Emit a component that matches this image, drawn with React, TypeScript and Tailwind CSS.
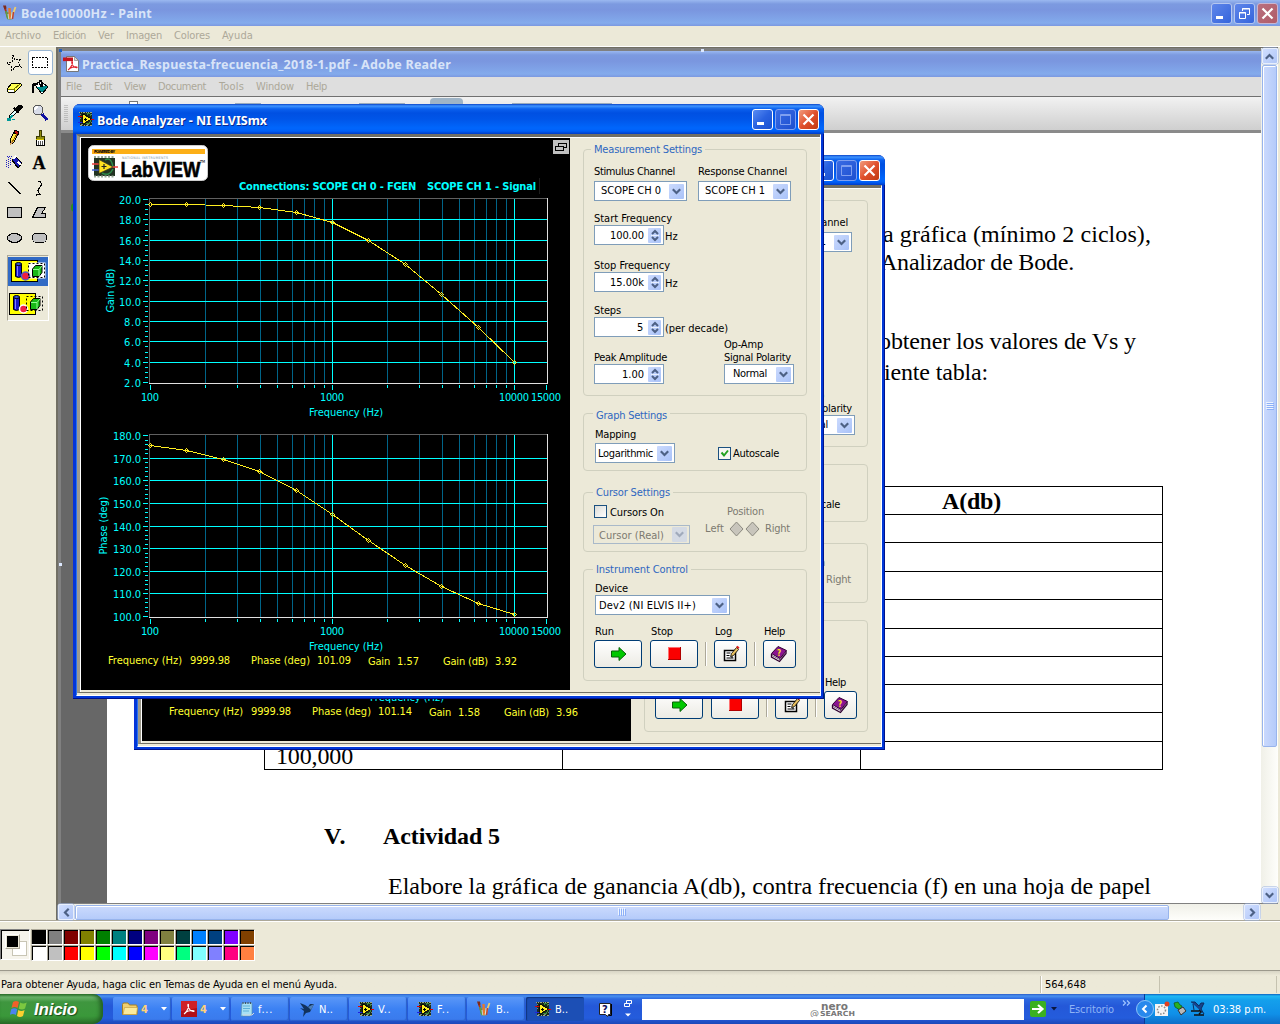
import React, { useLayoutEffect, useRef, useState } from "react";

/** Text tracked so that its run is exactly `w` pixels wide. */
function Fit({ w, className = "", children }: { w: number; className?: string; children: string }) {
  const ref = useRef<HTMLSpanElement>(null);
  const [ls, setLs] = useState(0);
  useLayoutEffect(() => {
    const el = ref.current;
    if (!el) return;
    const natural = el.getBoundingClientRect().width - ls * children.length;
    const next = (w - natural) / children.length;
    if (Math.abs(next - ls) > 0.005) setLs(next);
  }, [w, children]);
  return (
    <span className={"inline-block shrink-0 whitespace-nowrap " + className} style={{ width: w }}>
      <span ref={ref} className="inline-block" style={{ letterSpacing: ls }}>
        <span className="whitespace-pre">{children}</span>
      </span>
    </span>
  );
}

/* ---------- small icons ---------- */

const VIcon = ({ size = 16 }: { size?: number }) => (
  <svg width={size} height={size} viewBox="0 0 16 16" shapeRendering="crispEdges" className="shrink-0">
    <rect x="2" y="1" width="12" height="14" fill="#1b2b1b" />
    <path d="M1 1.500h1M3 1.500h1M5 1.500h2M8 1.500h1M10 1.500h1M12 1.500h2M2 14.500h2M6 14.500h1M8 14.500h2M12 14.500h2" stroke="#9a8" />
    <path d="M2.500 3v1M2.500 7v1M13.500 3v1M13.500 11v1M3 13.500h2M9 13.500h2" stroke="#787" />
    <path d="M9 4c1-3 3-2 4 1M8 12c3 2 4 0 5-3" stroke="#3c8c3c" fill="none" />
    <path d="M0 5.500h5M11 8.500h5" stroke="#e00000" />
    <path d="M0 11.500h5" stroke="#2020e0" />
    <path d="M4.500 3v10l8-5z" fill="#ffee20" stroke="#000" strokeWidth=".6" />
    <path d="M6 8.500h3M7.500 7v3" stroke="#000" strokeWidth="1" />
  </svg>
);

const PaintIcon = () => (
  <svg width="16" height="16" viewBox="0 0 16 16" className="shrink-0">
    <path d="M4 7l1 7q3 2 6 0l1-7z" fill="#7d9a88" opacity=".9" />
    <path d="M2.500 1.500L6 13" stroke="#b33016" strokeWidth="1.800" />
    <path d="M7.500 3l.5 11" stroke="#e8792a" strokeWidth="2.400" />
    <path d="M13.500 2L9.500 13" stroke="#f0cf6a" strokeWidth="1.800" />
    <path d="M4 6l2 8" stroke="#58a04a" strokeWidth="1.800" />
    <path d="M1 .5l3 0 .5 3-2 1z" fill="#802a1a" />
    <path d="M6 9l.8 5M10 7l-.8 7" stroke="#d9e6ee" strokeWidth=".8" />
    <path d="M11.500 7l-1 7" stroke="#b8403a" strokeWidth="1.500" />
  </svg>
);

const PdfIcon = () => (
  <svg width="17" height="16" viewBox="0 0 17 16" className="shrink-0">
    <path d="M3.500 .5h8l4 4v11h-12z" fill="#fff" stroke="#777" />
    <path d="M11.500 .5v4h4z" fill="#d8d8d8" stroke="#777" strokeWidth=".6" />
    <rect x="0" y="1.500" width="10" height="3.600" fill="#c4141c" />
    <path d="M5 14c2-1 5-6 4.500-8c-.6-1.200-1.500 .4 .2 3.200c1.300 2 3.500 3 4.300 2.300s-3-1.200-7 .8" fill="none" stroke="#e0202a" strokeWidth="1.100" />
  </svg>
);

const Chevron = ({ dir = "down", color = "#4d6185" }: { dir?: string; color?: string }) => (
  <svg
    width="9"
    height="7"
    viewBox="0 0 9 7"
    className={dir === "up" ? "rotate-180" : dir === "left" ? "rotate-90" : dir === "right" ? "-rotate-90" : ""}
  >
    <path d="M.8 1.300L4.500 5L8.200 1.300" fill="none" stroke={color} strokeWidth="2.200" />
  </svg>
);

/* ---------- Paint tool box ---------- */

const toolShapes: React.ReactNode[] = [
  <path d="M7 1l2 5 6-1-3 4 3 4-5-1-4 5-1-5-4-3 5-1z" fill="none" stroke="#000" strokeDasharray="2 1" />,
  <rect x="1.500" y="3.500" width="15" height="10" fill="none" stroke="#000" strokeDasharray="2 1" />,
  <>
    <path d="M6 4h8l1 1v2l-6 6H2l-1-1v-2z" fill="#ffff50" stroke="#000" />
    <path d="M2 10h6l6-5M8 10v3" fill="none" stroke="#777700" />
    <path d="M2 11h6v2H3z" fill="#fff" />
  </>,
  <>
    <path d="M4 6l5-4 8 6-6 7z" fill="#fff" stroke="#000" />
    <path d="M6 8l9-1 1 1-5 6z" fill="#008c8c" />
    <path d="M2 14V7q1-3 5-2" fill="none" stroke="#000" strokeWidth="2.500" />
    <path d="M8 6V1h2v5" fill="none" stroke="#000" />
    <path d="M9 5h3v3H9z" fill="#000" />
  </>,
  <>
    <path d="M10 5l3-4h2l1 1v2l-4 4z" fill="#000" stroke="#000" />
    <path d="M8 4l5 5" stroke="#000" strokeWidth="2" />
    <path d="M9 6l2 2-6 6H3v-2z" fill="#e0ffff" stroke="#000" />
    <path d="M5 11l2 1-2 2-2 1M1 14h3v2H1zM6 15h3" fill="#009a9a" stroke="#009a9a" />
  </>,
  <>
    <circle cx="7" cy="6" r="5" fill="#d8dce8" stroke="#555" />
    <path d="M4 6q0-3 3-3" stroke="#fff" strokeWidth="2" fill="none" />
    <path d="M11 10l5 6" stroke="#1010a0" strokeWidth="3" />
  </>,
  <>
    <path d="M9 1l4 2-5 10-4 3 0-5z" fill="#ffee40" stroke="#000" />
    <path d="M9 1l4 2-1 3-4-2z" fill="#c01010" stroke="#000" />
    <path d="M5 12l3 1-4 3z" fill="#d8a060" />
    <path d="M11 5L6 13" stroke="#a06000" />
  </>,
  <>
    <path d="M8 1h2v6h3v3H5V7h3z" fill="#908c10" stroke="#3c3c00" />
    <path d="M5 10h8v6H5z" fill="#fff" stroke="#000" />
    <path d="M7 12v4M9 12v4M11 12v4" stroke="#555" />
    <path d="M5 10h8" stroke="#d0c000" />
  </>,
  <>
    <path d="M6 6l4-3 6 6-4 5z" fill="#1818b0" stroke="#000" />
    <path d="M7 5l3-3M12 8l3 3" stroke="#fff" strokeWidth="1.500" />
    <path d="M2 3v12M4 4v8M0 6v8M1 2h6" stroke="#2020c0" strokeDasharray="1 1" />
  </>,
  <text x="8" y="14.500" textAnchor="middle" fontFamily="Liberation Serif" fontWeight="bold" fontSize="18" stroke="#000" strokeWidth=".3">A</text>,
  <path d="M2 3l13 12" stroke="#000" strokeWidth="1.300" />,
  <path d="M7 2q6 2 2 6t0 7l-4 1" fill="none" stroke="#000" strokeWidth="1.300" />,
  <rect x="1.500" y="3.500" width="14" height="10" fill="#c0c0c0" stroke="#000" />,
  <path d="M6.500 3.500h8l-4 6h4v4H1.500z" fill="#c0c0c0" stroke="#000" />,
  <ellipse cx="8.500" cy="9" rx="7" ry="4.500" fill="#c0c0c0" stroke="#000" />,
  <rect x="1.500" y="4" width="14" height="9.500" rx="4" fill="#c0c0c0" stroke="#000" />,
];

const Shapes = ({ opaque }: { opaque: boolean }) => (
  <svg width="36" height="24" viewBox="0 0 36 24" className="shrink-0">
    <rect x="1.500" y="1.500" width="26" height="21" fill="#ffff00" stroke="#000" />
    <rect x="19" y="4" width="16" height="15" fill={opaque ? "#fff" : "none"} stroke={opaque ? "#fff" : "none"} />
    <path d="M5.500 5v12.500q3 2 6 0V5z" fill="#1818c8" stroke="#000" />
    <path d="M7.500 7v10" stroke="#8080ff" />
    <ellipse cx="8.500" cy="5" rx="3" ry="1.500" fill="#3050e0" stroke="#000" />
    <circle cx="15.500" cy="17" r="4" fill="#f02040" stroke={opaque ? "#5060c0" : "#fff"} strokeWidth="1.500" />
    <path d="M22.500 10l3-3.500h6.500v7l-3 4h-6.500z" fill="#18b818" stroke="#000" />
    <path d="M23 10.500h6l3-3.500M29 10.500v6.500" stroke="#90ff90" fill="none" />
    <rect x="18.500" y="4.500" width="16" height="14" fill="none" stroke="#000" strokeDasharray="2 2" />
  </svg>
);

const ToolBox = () => (
  <div className="flex h-[873px] w-[56px] shrink-0 flex-col pl-[3px] pt-[3px]">
    <div className="grid grid-cols-[25px_25px]">
      {toolShapes.map((shape, i) => (
        <div
          key={i}
          className={
            "flex h-[25px] w-[25px] items-center justify-center " +
            (i === 1 ? "rounded-[3px] border border-[#98b5d3] bg-white" : "")
          }
        >
          <svg width="18" height="18" viewBox="0 0 18 18" className="-ml-px shrink-0" shapeRendering="crispEdges">
            {shape}
          </svg>
        </div>
      ))}
    </div>
    <div className="ml-1 mt-[5px] flex h-[66px] w-[42px] flex-col border border-b-white border-l-[#aca899] border-r-white border-t-[#aca899]">
      <div className="mt-px flex h-[29px] items-center justify-start bg-[#316ac5] pl-[2px]"><Shapes opaque /></div>
      <div className="flex h-[35px] items-center justify-start pt-[2px]"><Shapes opaque={false} /></div>
    </div>
  </div>
);

/* ---------- title bars ---------- */

const btnBase = "flex h-[21px] w-[21px] items-center justify-center rounded-[3px] border ";
function CaptionButtons({ dim = false }: { dim?: boolean }) {
  const blue = dim
    ? "border-[#b5c7f0] bg-linear-to-br from-[#5f86ea] to-[#3464dc]"
    : "border-white bg-linear-to-br from-[#5a8cf2] via-[#2a62e0] to-[#1b50d0]";
  const red = dim
    ? "border-[#c9b5d0] bg-linear-to-br from-[#b97080] to-[#b05c68]"
    : "border-white bg-linear-to-br from-[#f09a7c] via-[#e0502c] to-[#c03a10]";
  return (
    <div className="flex gap-[2px]">
      <div className={btnBase + blue}>
        <svg width="19" height="19"><rect x="4" y="12" width="7" height="3" fill="#fff" /></svg>
      </div>
      {dim ? (
        <div className={btnBase + blue}>
          <svg width="19" height="19" fill="none" stroke="#fff">
            <path d="M7.500 7V4.500h7v6h-2.500M7 5h8" /><path d="M4.500 8.500h6v6h-6zM4 9h7" />
          </svg>
        </div>
      ) : (
        <div className={btnBase + "border-[#7f9ff0] bg-linear-to-br from-[#3a6be4] to-[#1c4fd0]"}>
          <svg width="19" height="19" fill="none" stroke="#7f9ff0">
            <path d="M4.500 4.500h10v10h-10zM4 5.500h11" />
          </svg>
        </div>
      )}
      <div className={btnBase + red}>
        <svg width="19" height="19"><path d="M4.500 4.500l10 10M14.500 4.500l-10 10" stroke="#fff" strokeWidth="2.200" /></svg>
      </div>
    </div>
  );
}

/* ---------- Bode graphs ---------- */

const minorX = [205, 237, 260, 277, 292, 304, 314, 324, 387, 419, 442, 459, 474, 486, 496, 506];
const pointX = [150, 186, 223, 259, 296, 332, 368, 405, 441, 478, 514];

function Plot({ top, bottom, grid, labels, minorPer, ys, title, titleW, titleX }: {
  top: number; bottom: number; grid: number[]; labels: string[]; minorPer: number; ys: number[];
  title: string; titleW: number; titleX: number;
}) {
  const ticks: number[] = [];
  for (let i = 0; i < grid.length - 1; i++)
    for (let k = 1; k < minorPer; k++) ticks.push(Math.round(grid[i] + ((grid[i + 1] - grid[i]) * k) / minorPer));
  const mid = (top + bottom) / 2;
  return (
    <g fill="#00ffff">
      <g shapeRendering="crispEdges">
        {minorX.map((x) => <rect key={x} x={x} y={top} width="1" height={bottom - top} fill="#006488" />)}
        {[332, 514].map((x) => <rect key={x} x={x} y={top} width="1" height={bottom - top} />)}
        {grid.slice(1, -1).map((y) => <rect key={y} x="150" y={y} width="397" height="1" />)}
        <path d={`M149.500 ${bottom}V${top + 0.5}H547`} stroke="#606060" fill="none" />
        <path d={`M149 ${bottom + 0.5}H547.500V${top}`} stroke="#e0e0e0" fill="none" />
        {grid.map((y) => <rect key={y} x="143" y={y} width="5" height="1" />)}
        {ticks.map((y) => <rect key={y} x="145" y={y} width="3" height="1" />)}
        {minorX.map((x) => <rect key={x} x={x} y={bottom + 2} width="1" height="3" />)}
        {[150, 332, 514, 546].map((x) => <rect key={x} x={x} y={bottom + 2} width="1" height="5" />)}
        <polyline points={pointX.map((x, i) => `${x + 0.5},${ys[i] + 0.5}`).join(" ")} fill="none" stroke="#ffee20" />
        {pointX.map((x, i) => {
          const y = ys[i];
          return (
            <path
              key={x}
              d={`M${x} ${y - 1.5}h1M${x - 1} ${y - 0.5}h1M${x + 1} ${y - 0.5}h1M${x - 2} ${y + 0.5}h1M${x + 2} ${y + 0.5}h1M${x - 1} ${y + 1.5}h1M${x + 1} ${y + 1.5}h1M${x} ${y + 2.5}h1`}
              fill="none"
              stroke="#ffe820"
            />
          );
        })}
      </g>
      {labels.map((t, i) => {
        const w = t.length > 4 ? 28 : t.length > 3 ? 22 : 17;
        return <text key={t} x={141 - w} y={grid[i] + 5} textLength={w}>{t}</text>;
      })}
      <text x="141" y={bottom + 18} textLength="18">100</text>
      <text x="320" y={bottom + 18} textLength="24">1000</text>
      <text x="499" y={bottom + 18} textLength="30">10000</text>
      <text x="531" y={bottom + 18} textLength="30">15000</text>
      <text x="309" y={bottom + 33} textLength="74">Frequency (Hz)</text>
      <text transform={`translate(${titleX} ${mid + titleW / 2}) rotate(-90)`} textLength={titleW}>{title}</text>
    </g>
  );
}

const LabViewLogo = () => (
  <svg width="120" height="36" viewBox="0 0 120 36">
    <rect x=".5" y=".5" width="119" height="35" rx="5" fill="#fff" stroke="#ccc" />
    <rect x="4" y="4" width="113" height="5" fill="#fcaf17" />
    <text x="6" y="8.300" fontSize="4" fontWeight="bold" textLength="21">POWERED BY</text>
    <text x="34" y="14" fontSize="3.500" fill="#7890a0" textLength="46">NATIONAL INSTRUMENTS</text>
    <rect x="6" y="13" width="21" height="18" fill="#223322" />
    <path d="M6 12h21M6 31.500h21" stroke="#99aa99" strokeWidth="2" strokeDasharray="2 1.500" />
    <path d="M17 15q6-4 8 7M14 28q7 4 11-4" stroke="#2f8a4a" fill="none" strokeWidth="1.500" />
    <path d="M4 19h8M22 22h8" stroke="#f04040" strokeWidth="1.500" />
    <path d="M4 25h8" stroke="#4060d0" strokeWidth="1.500" />
    <path d="M11 14.500v14L25 22z" fill="#ffe020" stroke="#332" strokeWidth=".7" />
    <path d="M13.500 21.500h5M16 19v5" stroke="#222" strokeWidth="1.200" />
    <text x="32.500" y="31.500" fontFamily="Liberation Sans" fontSize="22.500" fontWeight="bold" stroke="#000" strokeWidth=".6" textLength="80" lengthAdjust="spacingAndGlyphs">LabVIEW</text>
    <text x="112" y="18" fontSize="4" textLength="5">TM</text>
  </svg>
);

function GraphPanel({ phase, gain, db }: { phase: string; gain: string; db: string }) {
  return (
    <div className="flex h-[552px] w-[489px] shrink-0 flex-col bg-black">
      <div className="flex h-[57px] items-start">
        <div className="ml-[7px] mt-[7px] w-[120px]"><LabViewLogo /></div>
        <div className="ml-[31px] mt-[40px] flex h-4 w-[301px] items-center gap-[11px] border-r border-[#1c1c1c] text-[11px] font-bold text-[#00ffff]">
          <Fit w={177}>Connections: SCOPE CH 0 - FGEN</Fit>
          <Fit w={109}>SCOPE CH 1 - Signal</Fit>
        </div>
        <div className="ml-[13px] mt-[2px] flex h-[14px] w-4 items-center justify-center bg-[#c0c0c0]">
          <svg width="12" height="10" fill="#c0c0c0" stroke="#000" shapeRendering="crispEdges">
            <path d="M3.500 1.500h8v4h-8z" /><path d="M.5 4.500h8v4h-8z" />
          </svg>
        </div>
      </div>
      <svg width="489" height="457" viewBox="81 195 489 457" fontSize="11" className="shrink-0">
        <Plot
          top={198} bottom={383} minorPer={4} title="Gain (dB)" titleW={44} titleX={114}
          grid={[199, 219, 240, 260, 280, 301, 321, 341, 362, 382]}
          labels={["20.0", "18.0", "16.0", "14.0", "12.0", "10.0", "8.0", "6.0", "4.0", "2.0"]}
          ys={[204, 204, 205, 207, 212, 222, 240, 264, 294, 327, 362]}
        />
        <Plot
          top={434} bottom={617} minorPer={5} title="Phase (deg)" titleW={58} titleX={107}
          grid={[435, 458, 480, 503, 526, 548, 571, 593, 616]}
          labels={["180.0", "170.0", "160.0", "150.0", "140.0", "130.0", "120.0", "110.0", "100.0"]}
          ys={[445, 450, 459, 471, 490, 514, 540, 565, 586, 603, 614]}
        />
      </svg>
      <div className="flex h-4 items-center pl-[27px] text-[11px] text-[#ffff30]">
        <Fit w={74}>Frequency (Hz)</Fit>
        <Fit w={40} className="ml-[8px]">9999.98</Fit>
        <Fit w={59} className="ml-[21px]">Phase (deg)</Fit>
        <Fit w={34} className="ml-[7px]">{phase}</Fit>
        <Fit w={22} className="ml-[17px] pt-[2px]">Gain</Fit>
        <Fit w={22} className="ml-[7px] pt-[2px]">{gain}</Fit>
        <Fit w={45} className="ml-[24px] pt-[2px]">Gain (dB)</Fit>
        <Fit w={22} className="ml-[7px] pt-[2px]">{db}</Fit>
      </div>
    </div>
  );
}

/* ---------- Bode controls ---------- */

function Combo({ className, w, pad, lift = "", dim = false, children }: {
  className: string; w: number; pad: string; lift?: string; dim?: boolean; children: string;
}) {
  return (
    <div className={"flex items-center justify-between border pr-[2px] " + pad + " " + className + " " +
      (dim ? "h-[19px] border-[#a9b9c9] bg-[#ece9d8] text-[#7c7a70]" : "h-5 border-[#7f9db9] bg-white")}>
      <Fit w={w} className={lift}>{children}</Fit>
      <span className={"flex h-[15px] w-[15px] items-center justify-center rounded-[1px] " +
        (dim ? "bg-[#d4dae4]" : "bg-linear-to-br from-[#cbdafd] to-[#a9c2f8]")}>
        <Chevron color={dim ? "#a0aabb" : "#4d6185"} />
      </span>
    </div>
  );
}

function Spinner({ w, children }: { w: number; children: string }) {
  return (
    <div className="flex h-5 w-[70px] items-center justify-end gap-[4px] border border-[#7f9db9] bg-white pr-[2px]">
      <Fit w={w}>{children}</Fit>
      <span className="flex h-[15px] w-[13px] flex-col items-center justify-between rounded-[1px] bg-linear-to-br from-[#cbdafd] to-[#a9c2f8] py-[1px]">
        <svg width="8" height="13" viewBox="0 0 8 13">
          <path d="M1 5l3-3 3 3M1 8l3 3 3-3" stroke="#4d6185" strokeWidth="2" fill="none" />
          <path d="M-1 6.500h10" stroke="#e8effd" />
        </svg>
      </span>
    </div>
  );
}

const Label = ({ w, children }: { w: number; children: string }) => (
  <div className="flex h-[15px] items-center pt-[2px]"><Fit w={w}>{children}</Fit></div>
);

function Group({ title, w, inset = "left-[9px] -top-[9px]", className, children }: {
  title: string; w: number; inset?: string; className: string; children: React.ReactNode;
}) {
  return (
    <div className={"relative w-[224px] rounded-[4px] border border-[#d0d0bf] " + className}>
      <div className={"absolute flex h-4 items-center bg-[#ece9d8] px-[3px] text-[#2f67c0] " + inset}>
        <Fit w={w}>{title}</Fit>
      </div>
      {children}
    </div>
  );
}

const pushBtn = "flex h-[28px] items-center justify-center rounded-[3px] border border-[#003c74] bg-linear-to-b from-white to-[#ecebe4]";
const Sep = () => <div className="mx-[7px] mt-[19px] h-[24px] w-[2px] border-l border-[#aca899] border-r border-r-white" />;

function Controls() {
  return (
    <div className="flex w-[251px] flex-col pl-[13px] pt-[11px] text-[11px] text-black">
      <Group title="Measurement Settings" w={108} inset="left-[7px] -top-[9px]" className="h-[247px] pl-[10px] pt-[13px]">
        <div className="flex gap-[11px]">
          <div><Label w={81}>Stimulus Channel</Label><div className="h-[3px]" /><Combo className="w-[93px]" pad="pl-[6px]" lift="-mt-[2px]" w={60}>SCOPE CH 0</Combo></div>
          <div><Label w={89}>Response Channel</Label><div className="h-[3px]" /><Combo className="w-[93px]" pad="pl-[6px]" lift="-mt-[2px]" w={60}>SCOPE CH 1</Combo></div>
        </div>
        <div className="mt-[9px]"><Label w={78}>Start Frequency</Label>
          <div className="flex items-center gap-[1px]"><Spinner w={34}>100.00</Spinner><Fit w={13} className="pt-[2px]">Hz</Fit></div></div>
        <div className="mt-[12px]"><Label w={76}>Stop Frequency</Label>
          <div className="flex items-center gap-[1px]"><Spinner w={34}>15.00k</Spinner><Fit w={13} className="pt-[2px]">Hz</Fit></div></div>
        <div className="mt-[10px]"><Label w={27}>Steps</Label>
          <div className="flex items-center gap-[1px]"><Spinner w={7}>5</Spinner><Fit w={63} className="pt-[2px]">(per decade)</Fit></div></div>
        <div className="flex h-[47px] items-end">
          <div className="w-[130px]"><Label w={73}>Peak Amplitude</Label><Spinner w={22}>1.00</Spinner></div>
          <div>
            <div className="flex h-[12px] items-center pt-[2px]"><Fit w={39}>Op-Amp</Fit></div>
            <Label w={67}>Signal Polarity</Label>
            <Combo className="w-[70px]" pad="pl-[8px]" lift="-mt-[2px]" w={34}>Normal</Combo>
          </div>
        </div>
      </Group>
      <Group title="Graph Settings" w={71} inset="left-[9px] -top-[7px]" className="mt-[17px] h-[58px] pl-[11px] pt-[12px]">
        <Label w={41}>Mapping</Label>
        <div className="mt-[2px] flex items-center">
          <Combo className="w-[80px]" pad="pl-[2px]" w={55}>Logarithmic</Combo>
          <span className="ml-[43px] flex h-[13px] w-[13px] items-center justify-center border border-[#1c5180] bg-[#f6f6f2]">
            <svg width="9" height="9"><path d="M1.500 3.500l2.500 3 4-5" stroke="#21a121" strokeWidth="2" fill="none" /></svg>
          </span>
          <Fit w={46} className="ml-[2px]">Autoscale</Fit>
        </div>
      </Group>
      <Group title="Cursor Settings" w={74} className="mt-[21px] flex h-[60px] pl-[9px] pt-[11px]">
        <div className="w-[112px]">
          <div className="flex h-[15px] items-center pl-px">
            <span className="h-[13px] w-[13px] border border-[#1c5180] bg-linear-to-br from-[#dcdcd7] to-white" />
            <Fit w={54} className="ml-[3px] pt-px">Cursors On</Fit>
          </div>
          <div className="h-[6px]" />
          <Combo className="w-[97px]" pad="pl-[5px]" lift="pt-[2px]" w={65} dim>Cursor (Real)</Combo>
        </div>
        <div className="-mt-px text-[#7c7a70]">
          <div className="pl-[22px]"><Label w={37}>Position</Label></div>
          <div className="mt-[3px] flex h-[15px] items-center">
            <Fit w={19}>Left</Fit>
            <svg width="34" height="16" viewBox="0 0 34 16" className="ml-[4px]" fill="#c8c5bc" stroke="#8c8a80">
              <path d="M8.500 1l6.500 7-6.500 7L2 8z" /><path d="M24.500 1l6.500 7-6.500 7L18 8z" />
            </svg>
            <Fit w={25} className="ml-[3px]">Right</Fit>
          </div>
        </div>
      </Group>
      <Group title="Instrument Control" w={92} className="mt-[17px] h-[112px] pl-[10px] pt-[10px]">
        <div className="pl-px"><Label w={33}>Device</Label>
          <Combo className="w-[135px]" pad="pl-[3px]" w={97}>Dev2 (NI ELVIS II+)</Combo></div>
        <div className="mt-[8px] flex">
          <div className="w-[48px]"><div className="pl-px"><Label w={19}>Run</Label></div>
            <div className={"mt-[2px] pl-[2px] " + pushBtn}>
              <svg width="16" height="16"><path d="M.5 5h7.500V1.500L15 8l-7 6.500V11H.5z" fill="#00c800" stroke="#086008" /></svg>
            </div></div>
          <div className="ml-[8px] w-[48px]"><div className="pl-px"><Label w={22}>Stop</Label></div>
            <div className={"mt-[2px] pb-px " + pushBtn}>
              <svg width="13" height="13"><path d="M0 0h13v13H0z" fill="#b00000" /><path d="M0 0h12v12H0z" fill="#ff7070" /><path d="M1 1h11v11H1z" fill="#fa0000" /></svg>
            </div></div>
          <Sep />
          <div className="w-[33px]"><div className="pl-px"><Label w={17}>Log</Label></div>
            <div className={"mt-[2px] " + pushBtn}>
              <svg width="18" height="18">
                <path d="M2.500 5.500h11v10h-11z" fill="#fff" stroke="#000" strokeWidth="1.500" />
                <path d="M4.500 8h4M4.500 10.500h3M4.500 13h7M9 12h2" stroke="#000" />
                <path d="M8.500 11.500l1-3 5-6 2 2-5 6z" fill="#e8c060" stroke="#000" strokeWidth=".8" />
                <path d="M14 2l1.500-1.200 2 1.800-1.200 1.500z" fill="#e02020" />
              </svg>
            </div></div>
          <Sep />
          <div className="w-[33px]"><div className="pl-px"><Label w={21}>Help</Label></div>
            <div className={"mt-[2px] pr-px " + pushBtn}>
              <svg width="18" height="18">
                <path d="M1.500 9v3l8 4.500 6.500-8V6" fill="#fff" stroke="#300030" strokeWidth="1.300" />
                <path d="M1.500 8.500L8 1.500l8.500 4L10 13.500z" fill="#8a1490" stroke="#300030" />
                <path d="M2 10.500l8 4.200 6-7.500" fill="none" stroke="#603060" strokeWidth=".8" />
                <text x="7" y="10.500" fontSize="8" fontWeight="bold" fill="#ffe020">?</text>
              </svg>
            </div></div>
        </div>
      </Group>
    </div>
  );
}

function BodeWindow({ className, phase, gain, db }: { className: string; phase: string; gain: string; db: string }) {
  return (
    <div className={"absolute flex h-[595px] w-[751px] flex-col overflow-hidden rounded-t-[7px] bg-[#0038d8] shadow-[inset_-1px_-1px_0_#00138c,inset_1px_0_0_#0831d9] " + className}>
      <div className="flex h-[30px] shrink-0 items-center justify-between bg-[linear-gradient(to_bottom,#0a44c8_0,#3e94ff_2px,#0a60ee_5px,#0050e2_9px,#0055e8_15px,#0066fc_24px,#0060f8_27px,#003cc8_30px)] pl-[5px] pr-[5px]">
        <div className="flex items-center gap-[3px]">
          <VIcon />
          <Fit w={170} className="pt-[2px] font-['Noto_Sans'] text-[12.5px] font-bold text-white [text-shadow:1px_1px_0_#0a2a90]">Bode Analyzer - NI ELVISmx</Fit>
        </div>
        <CaptionButtons />
      </div>
      <div className="mx-[3px] mb-[3px] flex h-[562px] flex-col border border-b-white border-l-[#2a70f0] border-r-white border-t-[#716f64] bg-[#ece9d8]">
        <div className="flex h-[558px] border-b border-l-[3px] border-t-[2px] border-b-[#716f64] border-l-[#9c998c] border-t-[#716f64] bg-[#ece9d8]">
          <div className="flex border-l border-t border-white">
            <GraphPanel phase={phase} gain={gain} db={db} />
            <Controls />
          </div>
        </div>
      </div>
    </div>
  );
}

/* ---------- Adobe Reader document ---------- */

const rowHeights = ["h-[28px]", "h-[28px]", "h-[29px]", "h-[28px]", "h-[29px]", "h-[28px]", "h-[28px]", "h-[28px]", "h-[29px]", "h-[28px]"];
const inactiveBar = "bg-[linear-gradient(to_bottom,#9ab8f0_0,#7c9ae0_4px,#7a96df_10px,#80a4e8_19px,#84abec_23px,#7b98e0_26px)]";

function Reader() {
  return (
    <div className="relative flex h-[852px] w-[1200px] flex-col overflow-hidden bg-white">
      <div className={"flex h-[26px] shrink-0 items-center gap-[2px] pl-[2px] " + inactiveBar}>
        <PdfIcon />
        <Fit w={369} className="font-['Noto_Sans'] text-[12.5px] font-bold text-[#d8e4f8]">Practica_Respuesta-frecuencia_2018-1.pdf - Adobe Reader</Fit>
      </div>
      <div className="flex h-5 shrink-0 items-center border-b border-[#707070] bg-[#dedede] pl-[5px] text-[11px] text-[#aca899]">
        <Fit w={16}>File</Fit><Fit w={18} className="ml-[12px]">Edit</Fit><Fit w={22} className="ml-[12px]">View</Fit>
        <Fit w={48} className="ml-[12px]">Document</Fit><Fit w={25} className="ml-[13px]">Tools</Fit>
        <Fit w={38} className="ml-[12px]">Window</Fit><Fit w={21} className="ml-[12px]">Help</Fit>
      </div>
      <div className="flex h-[36px] shrink-0 items-start border-b-[3px] border-[#8a8a8a] bg-linear-to-b from-[#f2f2f2] to-[#cfcfcf] pl-[3px]">
        <svg width="4" height="22" className="mt-[8px]"><path d="M1 0v18M3 0v18" stroke="#999" strokeDasharray="1 1" /></svg>
        <div className="ml-[61px] mt-[4px] h-[4px] w-[9px] border border-b-0 border-[#777] bg-white" />
        <div className="ml-[97px] mt-[6px] h-[3px] w-[26px] bg-[#9ab]" />
        <div className="ml-[98px] mt-[6px] h-[3px] w-[46px] bg-[#9ab]" />
        <div className="ml-[25px] mt-[1px] h-[6px] w-[33px] rounded-t-[4px] bg-[#9fb4c6]" />
        <div className="ml-[49px] mt-[6px] h-[3px] w-[100px] bg-[#9ab]" />
      </div>
      <div className="flex grow">
        <div className="flex w-[46px] shrink-0 justify-start bg-[#676767] pl-[10px] pt-[70px]">
          <div className="h-[9px] w-[4px] rounded-l-full bg-[#2f8f1f]" />
        </div>
        <div className="flex flex-col font-['Liberation_Serif'] text-[24px] leading-[28px] text-black">
          <div className="mt-[87px] pl-[776px]"><Fit w={268}>a gráfica (mínimo 2 ciclos),</Fit></div>
          <div className="pl-[773px]"><Fit w={194}>Analizador de Bode.</Fit></div>
          <div className="mt-[51px] pl-[772px]"><Fit w={257}>obtener los valores de Vs y</Fit></div>
          <div className="mt-[3px] pl-[777px]"><Fit w={104}>iente tabla:</Fit></div>
          <div className="ml-[157px] mt-[100px] w-[899px] border-l border-t border-black">
            {rowHeights.map((h, i) => (
              <div key={i} className={"grid grid-cols-[298px_298px_302px] border-b border-black " + h}>
                <div className="border-r border-black pl-[11px]">{i === 9 && <Fit w={77} className="-mt-px">100,000</Fit>}</div>
                <div className="border-r border-black" />
                <div className="border-r border-black pl-[81px] font-bold">{i === 0 && <Fit w={59}>A(db)</Fit>}</div>
              </div>
            ))}
          </div>
          <div className="mt-[52px] flex gap-[36px] pl-[217px] font-bold"><Fit w={23}>V.</Fit><Fit w={117}>Actividad 5</Fit></div>
          <div className="mt-[22px] pl-[281px]"><Fit w={763}>Elabore la gráfica de ganancia A(db), contra frecuencia (f) en una hoja de papel</Fit></div>
        </div>
      </div>
    </div>
  );
}

/* ---------- scroll bars ---------- */

const sbBtn = "flex h-[16px] w-[16px] shrink-0 items-center justify-center rounded-[2px] border border-[#e8effd] bg-linear-to-br from-[#d0defe] to-[#b0c6f8] shadow-[0_0_0_0.5px_#98b0e0]";

const VScroll = () => (
  <div className="flex h-[855px] w-[17px] flex-col items-center bg-linear-to-r from-[#f0f0e8] to-[#fefefb]">
    <div className={sbBtn}><Chevron dir="up" /></div>
    <div className="mt-[1px] flex h-[682px] w-[15px] items-center justify-center rounded-[2px] border border-[#98b4ec] bg-linear-to-r from-[#cbdafd] to-[#b5cbfa] shadow-[inset_1px_1px_0_white]">
      <svg width="8" height="8"><path d="M0 .5h7M0 2.500h7M0 4.500h7M0 6.500h7" stroke="#eef4fe" /><path d="M1 1.500h7M1 3.500h7M1 5.500h7M1 7.500h7" stroke="#8cb0f8" /></svg>
    </div>
    <div className={"mt-auto " + sbBtn}><Chevron /></div>
  </div>
);

const HScroll = () => (
  <div className="flex h-[16px] w-[1203px] items-center bg-linear-to-b from-[#f0f0e8] to-[#fefefb] pr-px">
    <div className={sbBtn}><Chevron dir="left" /></div>
    <div className="ml-[1px] flex h-[15px] w-[1094px] items-center justify-center rounded-[2px] border border-[#98b4ec] bg-linear-to-b from-[#cbdafd] to-[#b5cbfa] shadow-[inset_1px_1px_0_white]">
      <svg width="8" height="8"><path d="M.5 0v7M2.500 0v7M4.500 0v7M6.500 0v7" stroke="#eef4fe" /><path d="M1.500 1v7M3.500 1v7M5.500 1v7M7.500 1v7" stroke="#8cb0f8" /></svg>
    </div>
    <div className={"ml-auto " + sbBtn}><Chevron dir="right" /></div>
  </div>
);

/* ---------- colour box ---------- */

const swatches = [
  "bg-[#000000]", "bg-[#808080]", "bg-[#800000]", "bg-[#808000]", "bg-[#008000]", "bg-[#008080]", "bg-[#000080]",
  "bg-[#800080]", "bg-[#808040]", "bg-[#004040]", "bg-[#0080ff]", "bg-[#004080]", "bg-[#8000ff]", "bg-[#804000]",
  "bg-[#ffffff]", "bg-[#c0c0c0]", "bg-[#ff0000]", "bg-[#ffff00]", "bg-[#00ff00]", "bg-[#00ffff]", "bg-[#0000ff]",
  "bg-[#ff00ff]", "bg-[#ffff80]", "bg-[#00ff80]", "bg-[#80ffff]", "bg-[#8080ff]", "bg-[#ff0080]", "bg-[#ff8040]",
];

const ColorBox = () => (
  <div className="flex h-[49px] shrink-0 border-t border-white pt-[7px]">
    <div className="relative h-[31px] w-[30px] border border-b-white border-l-[#808080] border-r-white border-t-[#808080] bg-[#f6f4ec] shadow-[inset_1px_1px_0_#000]">
      <div className="absolute left-[11px] top-[11px] h-[15px] w-[15px] border border-[#c8c5b5] bg-white p-px" />
      <div className="absolute left-[4px] top-[4px] h-[15px] w-[15px] border border-b-[#aca899] border-l-white border-r-[#aca899] border-t-white bg-[#ece9d8] p-px">
        <div className="h-full bg-black" />
      </div>
    </div>
    <div className="ml-px grid grid-cols-[repeat(14,16px)] grid-rows-[16px_16px]">
      {swatches.map((c) => (
        <div key={c} className="border border-b-white border-l-[#aca899] border-r-white border-t-[#aca899]">
          <div className={"h-[14px] w-[14px] border-l border-t border-black " + c} />
        </div>
      ))}
    </div>
  </div>
);

/* ---------- task bar ---------- */

function Task({ icon, label, w, pressed = false }: { icon: React.ReactNode; label: string; w: number; pressed?: boolean }) {
  return (
    <div className={"flex h-[24px] w-[58px] items-center gap-[4px] rounded-[2px] pl-[9px] text-[11px] text-white " +
      (pressed ? "bg-[#1c4fb5] shadow-[inset_1px_1px_1px_#10357f]" : "bg-linear-to-b from-[#5a97f8] via-[#3c81f3] to-[#3a7aec] shadow-[inset_-1px_-1px_1px_#2a5fc8]")}>
      {icon}
      <Fit w={w}>{label}</Fit>
    </div>
  );
}

function StackTask({ icon }: { icon: React.ReactNode }) {
  return (
    <div className="flex h-[24px] w-[58px] items-center rounded-[2px] bg-linear-to-b from-[#5a97f8] via-[#3c81f3] to-[#3a7aec] pl-[9px] text-[11px] text-[#ffd27a] shadow-[inset_-1px_-1px_1px_#2a5fc8]">
      {icon}
      <Fit w={6} className="ml-[3px] font-bold">4</Fit>
      <svg width="7" height="4" className="ml-[14px]"><path d="M0 0h6L3 3.500z" fill="#fff" /></svg>
    </div>
  );
}

const folder = (
  <svg width="16" height="14"><path d="M.5 2.500q0-1.500 1.500-1.500h4l1.500 2H14q1 0 1 1v8.500H.5z" fill="#f0d070" stroke="#a88020" /><path d="M2.500 5.500h13l-1 7H1z" fill="#fbeb9c" stroke="#c8a040" strokeWidth=".7" /></svg>
);
const acrobat = (
  <svg width="16" height="16"><path d="M0 0h16v16H0z" fill="#b01018" /><path d="M0 0h16v7L0 10z" fill="#d02028" /><path d="M3 13c3-2 5-7 4.500-9.500c-.5-1-1.500 .5 .5 4c1.500 2.500 4 3.500 5 2.700s-4-1.500-9 1.300" fill="none" stroke="#fff" strokeWidth="1.100" /></svg>
);
const notepad = (
  <svg width="14" height="16"><path d="M2 2h10v11l-2 2H1z" fill="#a8e0f4" stroke="#5890b0" strokeWidth=".7" /><path d="M3 5h7M3 7.500h7M3 10h6" stroke="#5cb0d8" /><path d="M3 1v2M5.500 1v2M8 1v2M10.500 1v2" stroke="#456" /><path d="M3 14h9l2-2" stroke="#d8d8d8" fill="none" /></svg>
);
const eagle = (
  <svg width="16" height="16"><path d="M1 2l5 2 3 2 2-3 4 0-2 4-2 4-4 1-3 4 1-6-4-3 4 1z" fill="#12325c" /><path d="M9 6l6-3-3 6z" fill="#4d7fb8" /></svg>
);

const TaskBar = () => (
  <div className="flex h-[30px] shrink-0 items-center bg-[linear-gradient(to_bottom,#2a5cc8_0,#4a92f0_2px,#2d68e0_5px,#2458d8_12px,#245cdc_24px,#1c48b8_30px)] text-[11px]">
    <div className="flex h-[30px] w-[103px] items-center rounded-r-[10px] bg-[linear-gradient(to_bottom,#2f7a2f_0,#6db56d_3px,#3f963f_8px,#3a983a_22px,#2b702b_30px)] pl-[10px] shadow-[inset_-3px_0_4px_#236023]">
      <svg width="20" height="18" viewBox="0 0 20 18">
        <path d="M3 2q3-2 6 0L7.500 8q-3-2-6 0z" fill="#f0602a" /><path d="M10.200 2.500q3 2 6.500 0L15 8.500q-3 2-6.300 0z" fill="#7cc840" />
        <path d="M1.200 9.300q3-2 6 0L5.800 15q-3-2-6 0z" fill="#4a84f0" /><path d="M8.300 10q3 2 6.300 0L13 16q-3 2-6 0z" fill="#fcd030" />
      </svg>
      <Fit w={43} className="ml-[4px] font-['Liberation_Sans'] text-[17px] font-bold italic text-white [text-shadow:1px_1px_1px_#1a4a1a]">Inicio</Fit>
    </div>
    <div className="ml-[10px] flex gap-px">
      <StackTask icon={folder} /><StackTask icon={acrobat} />
      <Task icon={notepad} label="f..." w={15} /><Task icon={eagle} label="N.." w={14} /><Task icon={<VIcon />} label="V.." w={13} />
      <Task icon={<VIcon />} label="F.." w={13} /><Task icon={<PaintIcon />} label="B.." w={13} /><Task icon={<VIcon />} label="B.." w={13} pressed />
    </div>
    <svg width="14" height="16" className="ml-[15px] mt-[2px]"><path d="M.5 1.500h11v11h-2l-1 2-2-2h-6z" fill="#fff" stroke="#222" /><path d="M12.500 2v11.500h-3" stroke="#000" fill="none" /><text x="3" y="11" fontSize="11" fontWeight="bold" fill="#101060">?</text></svg>
    <svg width="10" height="18" className="ml-[11px]"><path d="M2.500 3V.5h5v3h-2M.5 3.500h5v3h-5z" stroke="#fff" fill="none" /><path d="M1 13.500h6l-3 3z" fill="#fff" /></svg>
    <div className="ml-[8px] flex h-[21px] w-[382px] items-center justify-center bg-white">
      <svg width="46" height="15" viewBox="0 0 46 15" fill="#777">
        <text x="11" y="7.500" fontSize="10" fontWeight="bold" textLength="27" lengthAdjust="spacingAndGlyphs">nero</text>
        <text x="0" y="14" fontSize="8" textLength="9" lengthAdjust="spacingAndGlyphs">@</text>
        <text x="10" y="14" fontSize="7" fontWeight="bold" textLength="35" lengthAdjust="spacingAndGlyphs">SEARCH</text>
      </svg>
    </div>
    <svg width="16" height="16" className="ml-[6px]"><rect width="16" height="16" rx="2" fill="#3ab020" /><path d="M2 8h10M8 4l4.500 4L8 12" stroke="#fff" strokeWidth="2.200" fill="none" /></svg>
    <svg width="6" height="4" className="ml-[5px]"><path d="M0 0h6L3 3.500z" fill="#0a1640" /></svg>
    <Fit w={45} className="ml-[12px] text-[#8fb4f6]">Escritorio</Fit>
    <svg width="9" height="7" className="-mt-[11px] ml-[8px]"><path d="M1 .5l2.500 2.500L1 5.500M5 .5l2.500 2.500L5 5.500" stroke="#a0c4ff" fill="none" strokeWidth="1.200" /></svg>
    <div className="ml-auto flex h-[30px] w-[136px] items-center border-l border-[#0b3a98] bg-[linear-gradient(to_bottom,#0c60c0_0,#20b8f4_2px,#14a0ec_6px,#1090e8_20px,#0e6ec8_30px)]">
      <svg width="18" height="18" className="-ml-[9px]"><circle cx="9" cy="9" r="8.500" fill="#2888ec" stroke="#8cc4f8" /><path d="M10.500 5.500L7 9l3.500 3.500" stroke="#fff" strokeWidth="2" fill="none" /></svg>
      <svg width="16" height="16"><rect x="1" y="3" width="13" height="12" fill="#f4f4f4" /><circle cx="7.500" cy="9" r="4" fill="none" stroke="#888" strokeDasharray="1.500 1.500" strokeWidth="1.500" /><circle cx="13" cy="3" r="2.500" fill="#e04020" /></svg>
      <svg width="14" height="16" className="ml-[3px]"><path d="M1 2l4-1 2 3 2 1-2 4-5-3z" fill="#28b020" stroke="#105010" strokeWidth=".7" /><path d="M5 9l5-3 3 4-5 4z" fill="#b8b8b8" stroke="#333" /></svg>
      <svg width="16" height="16" className="ml-[3px]"><path d="M1 1h4l4 4 2-3h3l-3 6 3 5M3 3l1 6" fill="#18448c" stroke="#0c2c60" /><path d="M1 10h8M4 14h10M9 9l2 2-2 2" stroke="#111" strokeWidth="1.500" fill="none" /></svg>
      <Fit w={53} className="ml-[7px] text-white">03:38 p.m.</Fit>
    </div>
  </div>
);

/* ---------- desktop ---------- */

export default function App() {
  return (
    <div className="flex h-[1024px] w-[1280px] flex-col overflow-hidden bg-[#ece9d8] font-['Tahoma','DejaVu_Sans_Condensed','DejaVu_Sans',sans-serif] text-[11px] leading-[13px] [font-stretch:condensed]">
      <div className={"flex h-[26px] shrink-0 items-center justify-between pl-[2px] pr-[2px] " + inactiveBar}>
        <div className="flex items-center gap-[3px]">
          <PaintIcon />
          <Fit w={131} className="font-['Noto_Sans'] text-[12.5px] font-bold text-[#d8e4f8]">Bode10000Hz - Paint</Fit>
        </div>
        <CaptionButtons dim />
      </div>
      <div className="flex h-[21px] shrink-0 items-center border-b border-white pb-[2px] pl-[5px] text-[#aca899]">
        <Fit w={36}>Archivo</Fit><Fit w={33} className="ml-[12px]">Edición</Fit><Fit w={16} className="ml-[12px]">Ver</Fit>
        <Fit w={36} className="ml-[12px]">Imagen</Fit><Fit w={36} className="ml-[12px]">Colores</Fit><Fit w={31} className="ml-[12px]">Ayuda</Fit>
      </div>
      <div className="flex h-[874px] shrink-0 border-b border-[#aca899]">
        <ToolBox />
        <div className="relative flex h-[873px] w-[1222px] flex-col border-l-2 border-t border-[#716f64] bg-[#808080]">
          <div className="flex h-[856px]">
            <div className="w-[1203px] pl-[3px] pt-[3px]"><Reader /></div>
            <VScroll />
          </div>
          <div className="flex bg-[#ece9d8]"><HScroll /></div>
          <div className="absolute left-px top-px h-[3px] w-[3px] bg-[#2060c0]" />
          <div className="absolute left-[643px] top-px h-[3px] w-[3px] bg-[#dce8ff]" />
          <div className="absolute left-px top-[515px] h-[3px] w-[3px] bg-[#dce8ff]" />
          <BodeWindow className="left-[76px] top-[107px]" phase="101.14" gain="1.58" db="3.96" />
          <BodeWindow className="left-[15px] top-[56px]" phase="101.09" gain="1.57" db="3.92" />
        </div>
      </div>
      <ColorBox />
      <div className="flex h-[24px] shrink-0 items-center border-t border-[#9c998c] bg-linear-to-b from-[#d8d5c5] via-[#ece9d8] via-20% to-[#ece9d8] pl-px pt-[3px]">
        <Fit w={336}>Para obtener Ayuda, haga clic en Temas de Ayuda en el menú Ayuda.</Fit>
        <div className="ml-[703px] flex h-[17px] w-[119px] items-center border-l border-[#c5c2b0] pl-[4px] shadow-[inset_1px_0_0_white]"><Fit w={41}>564,648</Fit></div>
        <div className="h-[17px] w-[118px] border-x border-[#c5c2b0]" />
      </div>
      <TaskBar />
    </div>
  );
}
